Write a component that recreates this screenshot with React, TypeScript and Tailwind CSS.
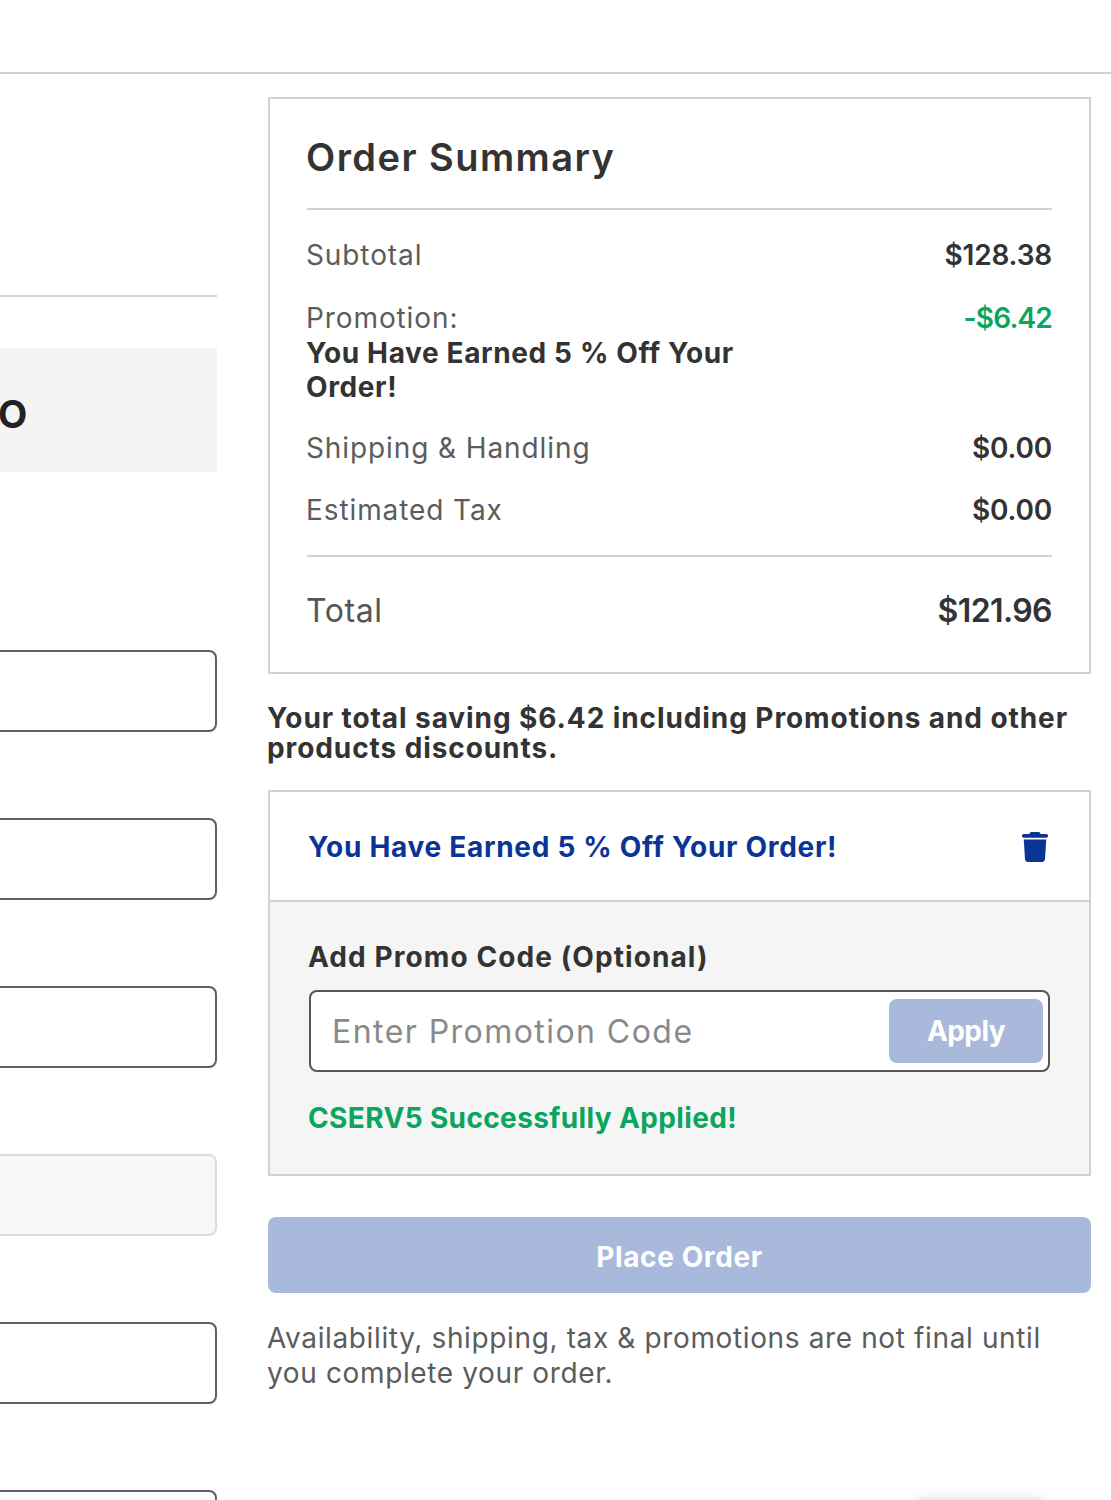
import { FaTrash } from "react-icons/fa6";

const font = "font-['Inter','Liberation_Sans',sans-serif]";

function FieldBox({ disabled = false }: { disabled?: boolean }) {
  return (
    <div
      className={
        disabled
          ? "h-[82px] rounded-r-lg border-y-2 border-r-2 border-[#dcdcdc] bg-[#f7f7f7]"
          : "h-[82px] rounded-r-lg border-y-2 border-r-2 border-[#5f5f5f] bg-white"
      }
    />
  );
}

function SummaryRow({ label, value, className }: { label: string; value: string; className: string }) {
  return (
    <div className={`${className} flex items-center justify-between text-[28px] leading-[35px]`}>
      <span className="-ml-px font-normal tracking-[0.9px] text-[#5c5c5c]">{label}</span>
      <span className="font-semibold tracking-[-0.2px] text-[#333333]">{value}</span>
    </div>
  );
}

export default function App() {
  return (
    <div className={`${font} relative h-[1500px] w-[1111px] overflow-hidden bg-white`}>
      {/* header rule */}
      <div className="h-[74px] border-b-2 border-[#d2d2d2]" />

      <div className="flex items-start gap-[51px] pr-5">
        {/* left column, cut off by the crop */}
        <div className="w-[217px] shrink-0 overflow-hidden">
          <div className="mt-[221px] h-0.5 bg-[#d2d2d2]" />
          <div className="mt-[51px] flex h-[124px] items-center bg-[#f4f4f4]">
            <span className="-ml-[2px] mt-[7px] text-[38px] font-bold leading-none text-[#222222]">O</span>
          </div>
          <div className="mt-[178px] flex flex-col gap-[86px]">
            <FieldBox />
            <FieldBox />
            <FieldBox />
            <FieldBox disabled />
            <FieldBox />
            <FieldBox />
          </div>
        </div>

        {/* right column */}
        <div className="mt-[23px] w-[823px] shrink-0">
          <section className="h-[577px] border-2 border-[#d2d2d2] px-[37px]">
            <h2 className="-ml-px flex h-[109px] items-center pt-2 text-[38px] font-semibold tracking-[1.45px] text-[#333333]">
              Order Summary
            </h2>
            <div className="h-0.5 bg-[#d2d2d2]" />
            <SummaryRow className="mt-[28px]" label="Subtotal" value="$128.38" />
            <div className="mt-[28px] flex items-start justify-between text-[28px] leading-[34.5px]">
              <div className="-ml-px w-[460px]">
                <div className="font-normal tracking-[0.9px] text-[#5c5c5c]">Promotion:</div>
                <div className="font-bold tracking-[0.62px] text-[#333333]">You Have Earned 5 % Off Your Order!</div>
              </div>
              <span className="font-semibold tracking-[-0.8px] text-[#0aa55e]">-$6.42</span>
            </div>
            <SummaryRow className="mt-[26px]" label="Shipping & Handling" value="$0.00" />
            <SummaryRow className="mt-[27px]" label="Estimated Tax" value="$0.00" />
            <div className="mt-[27px] h-0.5 bg-[#d2d2d2]" />
            <div className="mt-[34px] flex items-center justify-between text-[32px] leading-10">
              <span className="-ml-px font-normal tracking-[0.6px] text-[#555555]">Total</span>
              <span className="font-semibold tracking-[-0.6px] text-[#333333]">$121.96</span>
            </div>
          </section>

          <p className="-ml-px mt-[29px] text-[28px] font-bold leading-[30px] tracking-[0.91px] text-[#333333]">
            Your total saving $6.42 including Promotions and other products discounts.
          </p>

          <section className="mt-[27px] border-2 border-[#d2d2d2]">
            <div className="flex h-[108px] items-center justify-between pl-[38px] pr-[39px] pt-0.5">
              <span className="text-[28px] font-bold tracking-[0.7px] text-[#0b3497]">
                You Have Earned 5 % Off Your Order!
              </span>
              <FaTrash className="text-[30px] text-[#0b3497]" />
            </div>
            <div className="h-[274px] border-t-2 border-[#d2d2d2] bg-[#f5f5f5] px-[39px] pt-[37px]">
              <div className="-ml-px text-[28px] font-bold leading-9 tracking-[1.08px] text-[#333333]">
                Add Promo Code (Optional)
              </div>
              <div className="mt-[15px] flex h-[82px] items-center justify-between rounded-lg border-2 border-[#555555] bg-white pl-[21px] pr-[5px]">
                <span className="pt-0.5 text-[32px] font-normal tracking-[1.45px] text-[#8a8a8a]">Enter Promotion Code</span>
                <button className="flex h-16 w-[154px] items-center justify-center rounded-lg bg-[#a9b9dc] text-[28px] font-bold tracking-[-0.6px] text-white">
                  Apply
                </button>
              </div>
              <div className="-ml-px mt-[28px] text-[28px] font-bold leading-9 tracking-[0.37px] text-[#0aa55e]">
                CSERV5 Successfully Applied!
              </div>
            </div>
          </section>

          <button className="mt-[41px] flex h-[76px] w-full items-center justify-center rounded-lg bg-[#a9b9dc] pt-1 text-[28px] font-bold tracking-[0.6px] text-white">
            Place Order
          </button>

          <p className="-ml-px mt-[28px] text-[28px] font-normal leading-[35px] tracking-[0.63px] text-[#5c5c5c]">
            Availability, shipping, tax &amp; promotions are not final until
            <br />
            you complete your order.
          </p>
        </div>
      </div>

      {/* shadow of a floating element sitting just below the crop */}
      <div className="absolute left-[915px] top-[1503px] h-10 w-[130px] rounded-lg shadow-[0_0_14px_rgba(0,0,0,0.3)]" />
    </div>
  );
}
